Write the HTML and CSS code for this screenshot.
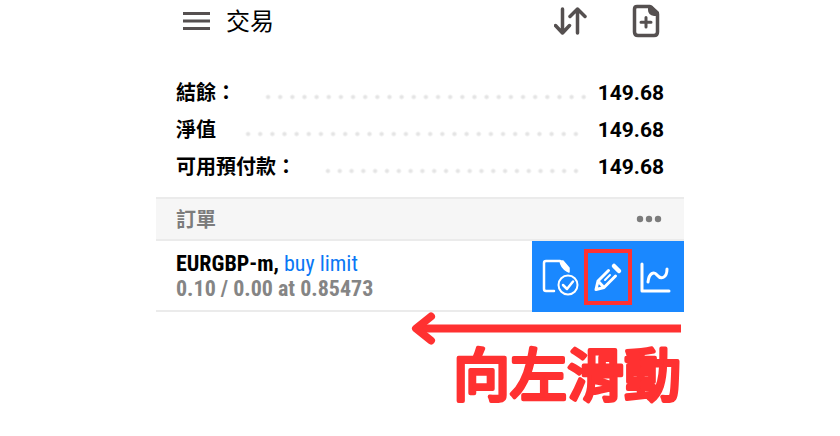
FILE: index.html
```html
<!DOCTYPE html>
<html lang="zh-Hant">
<head>
  <meta charset="UTF-8">
  <meta name="viewport" content="width=device-width, initial-scale=1.0">
  <title>交易</title>
  <link rel="stylesheet" href="styles.css">
</head>
<body>
  <main class="screen">
    <header class="topbar">
      <button class="icon-button" aria-label="Menu">
        <svg width="28" height="20" viewBox="0 0 28 20" fill="none" stroke="#555050" stroke-width="3">
          <path d="M0 2.5H27M0 10H27M0 17.5H27"/>
        </svg>
      </button>
      <h1>交易</h1>
      <button class="icon-button" aria-label="Sort">
        <svg width="34" height="30" viewBox="0 0 34 30" fill="none" stroke="#555050" stroke-width="3.500" stroke-linecap="round" stroke-linejoin="round">
          <path d="M8.500 3V27M1.500 19.500L8.500 27L15.500 19.500M23.500 27V3M16 10.500L23.500 3L31 10.500"/>
        </svg>
      </button>
      <button class="icon-button new-order" aria-label="New order">
        <svg width="28" height="34" viewBox="0 0 28 34">
          <path d="M5 2.500H18L25.500 10V28Q25.500 31.500 22 31.500H6Q2.500 31.500 2.500 28V5Q2.500 2.500 5 2.500Z" fill="none" stroke="#555050" stroke-width="3.500" stroke-linejoin="round"/>
          <path d="M16 1.500H20L27 8V12H22Q16 11 16 6Z" fill="#555050"/>
          <path d="M14 13.500V23M9 18.300H19" fill="none" stroke="#555050" stroke-width="3" stroke-linecap="round"/>
        </svg>
      </button>
    </header>

    <dl class="balance">
      <div class="balance-row wide">
        <dt>結餘：</dt>
        <dd>149.68</dd>
      </div>
      <div class="balance-row">
        <dt>淨值</dt>
        <dd>149.68</dd>
      </div>
      <div class="balance-row">
        <dt>可用預付款：</dt>
        <dd>149.68</dd>
      </div>
    </dl>

    <div class="section-title">
      <h2>訂單</h2>
      <button class="icon-button" aria-label="More">
        <svg width="26" height="8" viewBox="0 0 26 8" fill="#7c7c7c">
          <circle cx="4" cy="4" r="3.200"/>
          <circle cx="13" cy="4" r="3.200"/>
          <circle cx="22" cy="4" r="3.200"/>
        </svg>
      </button>
    </div>

    <div class="order">
      <div class="order-info">
        <p class="symbol">EURGBP-m, <span class="side">buy limit</span></p>
        <p class="volume">0.10 / 0.00 at 0.85473</p>
      </div>
      <div class="actions">
        <button class="action" aria-label="Close order">
          <svg width="38" height="38" viewBox="0 0 38 38" fill="none" stroke="#fff" stroke-width="2.500" stroke-linecap="round" stroke-linejoin="round">
            <path d="M13 33H5Q3 33 3 31V5Q3 3 5 3H19"/>
            <path d="M19 3H22L28 10V14L26 13Q20 10 19 3Z" fill="#fff" stroke-width="1.500"/>
            <circle cx="27" cy="27" r="9.500" stroke-width="2"/>
            <path d="M22 27L26 31L32 23.500"/>
          </svg>
        </button>
        <button class="action marked" aria-label="Edit order">
          <svg width="30" height="30" viewBox="0 0 30 30" fill="none" stroke="#fff" stroke-width="3" stroke-linecap="round" stroke-linejoin="round">
            <path d="M15.500 8.500L5 19L3 27.500L11 25.500L22.500 14M5 19L11 25.500" />
            <path d="M17 13L12 18" stroke-width="2"/>
            <path d="M21 4L26 9" stroke-width="4.500"/>
          </svg>
        </button>
        <button class="action" aria-label="Chart">
          <svg width="32" height="32" viewBox="0 0 32 32" fill="none" stroke="#fff" stroke-width="3" stroke-linecap="round" stroke-linejoin="round">
            <path d="M2 3V30H29"/>
            <path d="M8 21C9 12 14 10 17 14C21 19 27 17 27 8"/>
          </svg>
        </button>
      </div>
    </div>

    <div class="swipe">
      <svg width="270" height="34" viewBox="0 0 270 34" fill="none" stroke="#ff3131" stroke-width="8">
        <path d="M6 16.500H270"/>
        <path d="M20 4.500L5 16.500L20 28.500" stroke-linecap="round" stroke-linejoin="round"/>
      </svg>
      <svg class="swipe-text" width="230" height="60" viewBox="0 0 230 60">
        <text x="230" y="50" text-anchor="end">向左滑動</text>
      </svg>
    </div>
  </main>
</body>
</html>
```

FILE: styles.css
```css
body {
  margin: 0;
  background: #fff;
  color: #000;
  font-family: Roboto, "Noto Sans CJK TC", sans-serif;
}
h1, h2, p, dl, dd {
  margin: 0;
}
button {
  padding: 0;
  border: 0;
  background: none;
}
svg {
  display: block;
}
.screen {
  max-width: 528px;
  margin: 0 auto;
}
.topbar {
  display: flex;
  align-items: center;
  height: 42px;
  padding: 0 24px 0 27px;
}
.topbar h1 {
  flex: 1;
  margin-left: 15px;
  padding-top: 2px;
  font-size: 24px;
  font-weight: 400;
  line-height: 42px;
}
.new-order {
  margin-left: 44px;
}
.balance {
  padding: 33px 20px 11px;
}
.balance-row {
  display: flex;
  align-items: baseline;
  font-size: 20px;
  font-weight: 700;
  line-height: 37px;
}
/* dotted leader between label and amount */
.balance-row::after {
  content: "";
  order: 1;
  flex: 1;
  align-self: stretch;
  margin: 0 16px 0 26px;
  background: radial-gradient(circle, #e4e4e4 1px, transparent 3px) 0 18px / 12px 8px round no-repeat;
}
.balance-row.wide::after {
  margin-right: 8px;
}
.balance-row dd {
  order: 2;
  font-size: 21px;
}
.section-title {
  display: flex;
  align-items: center;
  justify-content: space-between;
  padding: 0 22px 0 20px;
  border-top: 2px solid #ebebeb;
  border-bottom: 2px solid #ebebeb;
  background: #f6f6f6;
}
.section-title h2 {
  padding-top: 2px;
  color: #7c7c7c;
  font-size: 20px;
  font-weight: 700;
  line-height: 38px;
}
.order {
  display: flex;
  justify-content: space-between;
  border-bottom: 2px solid #ebebeb;
}
.order-info {
  padding: 10px 0 9px 20px;
  font-family: "Roboto Condensed", "Liberation Sans Narrow", Roboto, sans-serif;
  font-size: 22px;
  font-weight: 700;
  line-height: 25px;
}
.side {
  color: #0a78f5;
  font-weight: 400;
}
.volume {
  color: #858585;
}
.actions {
  display: flex;
  align-items: center;
  gap: 4px;
  margin-bottom: -2px;
  padding: 0 8px;
  background: #1a88ff;
}
.action {
  display: flex;
  align-items: center;
  justify-content: center;
  width: 40px;
  height: 56px;
}
.marked {
  width: 48px;
  border: 4px solid #ff3131;
}
.swipe {
  display: flex;
  flex-direction: column;
  align-items: flex-end;
  padding-right: 3px;
}
.swipe-text {
  overflow: visible;
  fill: #ff3131;
  stroke: #ff3131;
  stroke-width: 4px;
  stroke-linejoin: round;
  font-size: 57px;
  font-weight: 400;
}
```
